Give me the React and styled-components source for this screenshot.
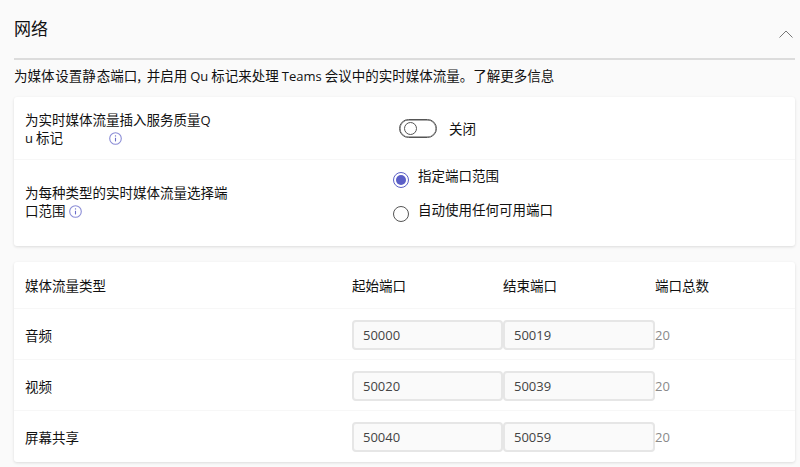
import React from 'react';
import styled, { createGlobalStyle } from 'styled-components';

const GlobalStyle = createGlobalStyle`
  html, body {
    margin: 0;
    padding: 0;
    background: #fafafa;
    overflow: hidden;
  }
  body {
    font-family: "Noto Sans CJK SC", "Open Sans", sans-serif;
    font-size: 13.5px;
    color: #111;
  }
`;

const Page = styled.div`
  box-sizing: border-box;
  width: 800px;
  height: 467px;
  padding: 0 5px 0 14px;
  overflow: hidden;
`;

const Header = styled.div`
  box-sizing: border-box;
  height: 60px;
  border-bottom: 2px solid #dcdcdc;
  display: flex;
  justify-content: space-between;
  padding: 17px 2px 0 0;
`;

const Title = styled.div`
  font-size: 17px;
  line-height: 22px;
`;

const Chevron = styled.svg`
  width: 14px;
  height: 8px;
  margin-top: 13px;
`;

const Description = styled.div`
  box-sizing: border-box;
  height: 37px;
  padding-top: 5px;
  line-height: 20px;
  white-space: nowrap;
`;

const Card = styled.div`
  background: #fff;
  border-radius: 3px;
  box-shadow: 0 1px 3px rgba(0, 0, 0, 0.12);
`;

const SettingRow = styled.div`
  display: grid;
  grid-template-columns: 368px 1fr;
  height: ${(p) => p.$height}px;
  box-sizing: border-box;
  padding-left: 11px;
  & + & {
    border-top: 1px solid #f7f7f7;
  }
`;

const SettingLabel = styled.div`
  width: ${(p) => p.$width}px;
  line-height: 18px;
  align-self: start;
  padding-top: ${(p) => p.$top}px;
`;

const Latin = styled.span`
  font-family: "Open Sans", sans-serif;
  font-size: 13px;
  line-height: 1;
`;

const InfoIcon = styled.svg`
  width: 13px;
  height: 13px;
  vertical-align: -2px;
  margin-left: ${(p) => p.$gap}px;
`;

const ToggleWrap = styled.div`
  display: flex;
  align-items: center;
  gap: 12px;
  padding-left: 6px;
`;

const Switch = styled.span`
  box-sizing: border-box;
  display: block;
  width: 38px;
  height: 19px;
  border: 1px solid #555;
  border-radius: 10px;
  padding: 2px 4px;
  box-shadow: inset 0 0 0 0.5px #555;
  &::before {
    content: '';
    display: block;
    box-sizing: border-box;
    width: 13px;
    height: 13px;
    border: 1px solid #555;
    border-radius: 50%;
  }
`;

const RadioGroup = styled.div`
  display: flex;
  flex-direction: column;
  padding-top: 5px;
`;

const RadioRow = styled.div`
  display: flex;
  align-items: flex-start;
  gap: 9px;
  height: 34px;
`;

const Radio = styled.span`
  box-sizing: border-box;
  flex: none;
  width: 16px;
  height: 16px;
  margin-top: 7px;
  border-radius: 50%;
  border: 1px solid ${(p) => (p.$checked ? '#5b5fc7' : '#555')};
  display: flex;
  align-items: center;
  justify-content: center;
  &::before {
    content: '';
    display: ${(p) => (p.$checked ? 'block' : 'none')};
    width: 10px;
    height: 10px;
    border-radius: 50%;
    background: #5b5fc7;
  }
`;

const RadioText = styled.span`
  line-height: 20px;
`;

const TableCard = styled(Card)`
  margin-top: 16px;
  padding-bottom: 1px;
`;

const TableRow = styled.div`
  display: grid;
  grid-template-columns: 338px 151px 152px 1fr;
  align-items: center;
  height: 46px;
  box-sizing: border-box;
`;

const PortRow = styled(TableRow)`
  height: 51px;
  padding-top: 2px;
  border-top: 1px solid #f7f7f7;
`;

const NameCell = styled.div`
  padding-left: 11px;
`;

const PortInput = styled.div`
  box-sizing: border-box;
  height: 30px;
  background: #fafafa;
  border: 2px solid #e6e6e6;
  border-radius: 4px;
  padding: 0 9px;
  font-family: "Open Sans", sans-serif;
  font-size: 13px;
  line-height: 26px;
  color: #444;
`;

const TotalCell = styled.div`
  font-family: "Open Sans", sans-serif;
  font-size: 13px;
  color: #8a8a8a;
`;

const Info = ({ gap }) => (
  <InfoIcon $gap={gap} viewBox="0 0 13 13" fill="none">
    <circle cx="6.5" cy="6.5" r="5.8" stroke="#8b8dd6" strokeWidth="1.1" />
    <path d="M6.5 5.8v3.6" stroke="#6a6dc9" strokeWidth="1.1" />
    <circle cx="6.5" cy="3.9" r="0.7" fill="#6a6dc9" />
  </InfoIcon>
);

const rows = [
  { name: '音频', start: '50000', end: '50019', total: '20' },
  { name: '视频', start: '50020', end: '50039', total: '20' },
  { name: '屏幕共享', start: '50040', end: '50059', total: '20' },
];

export default function App() {
  return (
    <Page>
      <GlobalStyle />
      <Header>
        <Title>网络</Title>
        <Chevron viewBox="0 0 14 8" fill="none">
          <path d="M0.5 7.5 7 1l6.5 6.5" stroke="#777" strokeWidth="1" />
        </Chevron>
      </Header>
      <Description>
        为媒体{'\u200A'}设置静{'\u200A'}态端口, {'\u2009'}并启用 <Latin>Qu</Latin> 标记来处理 <Latin>Teams</Latin> 会议中的实时媒体流量。了解更多信息
      </Description>
      <Card>
        <SettingRow $height={62}>
          <SettingLabel $width={192} $top={13}>
            为实时媒体流量插入服务质量<Latin>Q</Latin>
            <br />
            <Latin>u</Latin> 标记
            <Info gap={46} />
          </SettingLabel>
          <ToggleWrap>
            <Switch />
            <span>关闭</span>
          </ToggleWrap>
        </SettingRow>
        <SettingRow $height={87}>
          <SettingLabel $width={210} $top={23}>
            为每种类型的实时媒体流量选择端口范围
            <Info gap={3} />
          </SettingLabel>
          <RadioGroup>
            <RadioRow>
              <Radio $checked />
              <RadioText>指定端口范围</RadioText>
            </RadioRow>
            <RadioRow>
              <Radio />
              <RadioText>自动使用任何可用端口</RadioText>
            </RadioRow>
          </RadioGroup>
        </SettingRow>
      </Card>
      <TableCard>
        <TableRow>
          <NameCell>媒体流量类型</NameCell>
          <div>起始端口</div>
          <div>结束端口</div>
          <div>端口总数</div>
        </TableRow>
        {rows.map((row) => (
          <PortRow key={row.name}>
            <NameCell>{row.name}</NameCell>
            <PortInput>{row.start}</PortInput>
            <PortInput>{row.end}</PortInput>
            <TotalCell>{row.total}</TotalCell>
          </PortRow>
        ))}
      </TableCard>
    </Page>
  );
}
